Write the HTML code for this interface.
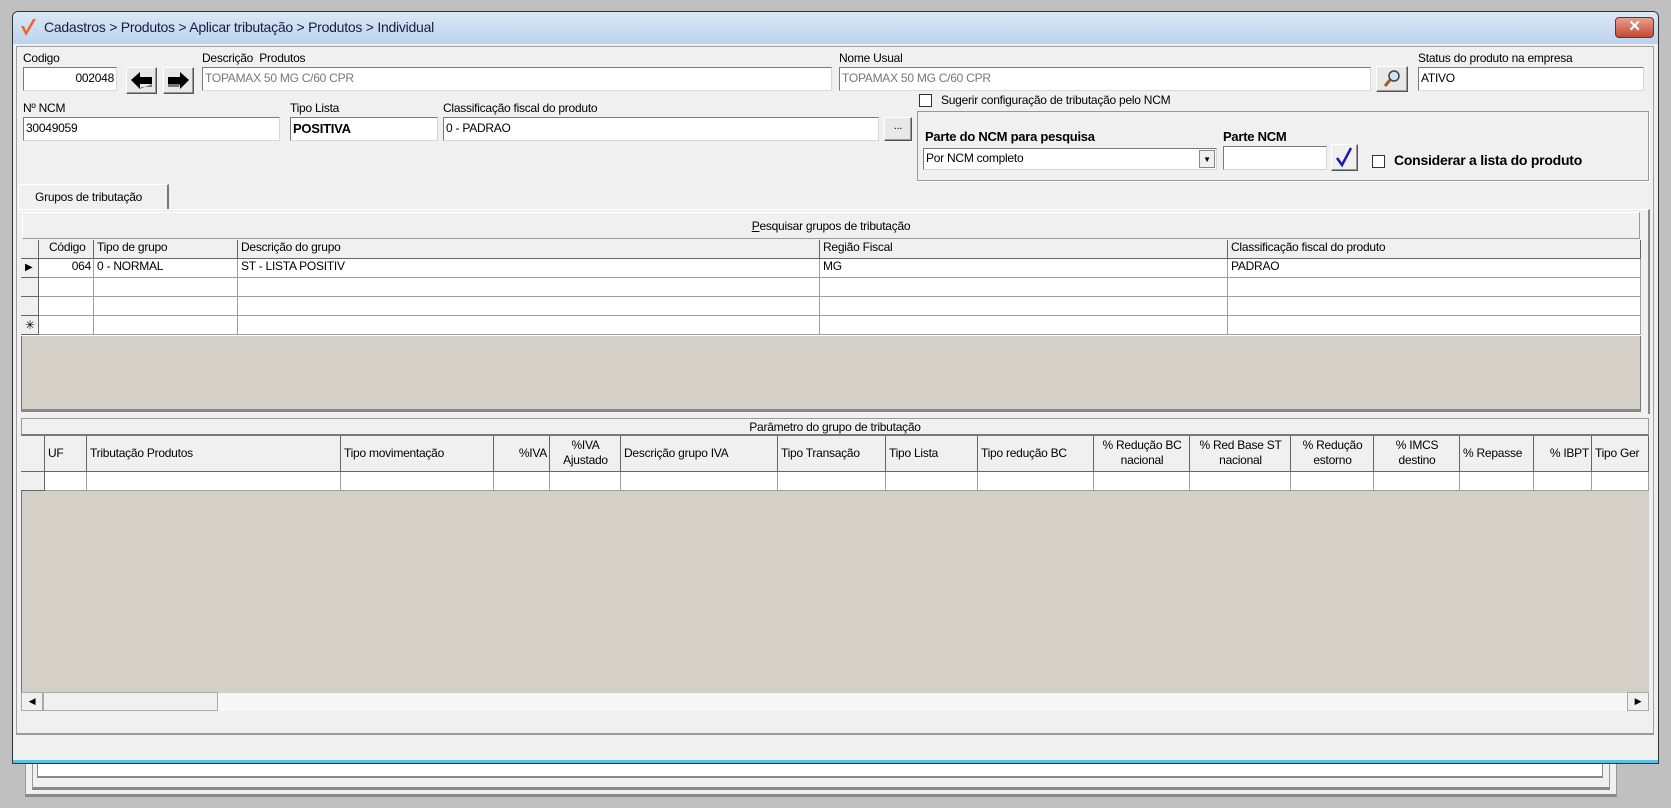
<!DOCTYPE html>
<html><head><meta charset="utf-8">
<style>
*{box-sizing:border-box;margin:0;padding:0}
body{width:1671px;height:808px;background:#c0c0c0;position:relative;overflow:hidden;font-family:"Liberation Sans",sans-serif;font-size:12px;color:#000;letter-spacing:-0.25px}
.a{position:absolute}
.inp{position:absolute;background:#fff;border:1px solid #7a7a7a;border-right-color:#d8d8d8;border-bottom-color:#d8d8d8;height:24px;line-height:21px;padding-left:2px;white-space:nowrap;overflow:hidden}
.gray{color:#777}
.btn{position:absolute;background:#e8e8e8;border:1px solid #fff;border-right-color:#555;border-bottom-color:#555;box-shadow:inset -1px -1px 0 #999}
.lbl{position:absolute;white-space:nowrap}
.cb{position:absolute;width:13px;height:13px;border:1px solid #333;background:#fff}
.g{position:absolute;border-right:1px solid #a0a0a0;border-bottom:1px solid #a0a0a0;white-space:nowrap;overflow:hidden;padding-left:3px}
.hd{background:#f0f0f0}
</style></head><body>
<!-- background windows -->
<div class="a" style="left:25px;top:760px;width:1592px;height:37px;background:#f0f0f0;border:1px solid #999;border-bottom:3px solid #888"></div>
<div class="a" style="left:32px;top:760px;width:1578px;height:30px;border-bottom:3px solid #888;border-left:1px solid #999;border-right:1px solid #999"></div>
<div class="a" style="left:37px;top:760px;width:1566px;height:18px;background:#fff;border:1px solid #888;border-top:0;border-bottom:2px solid #888"></div>
<!-- main window -->
<div class="a" style="left:12px;top:11px;width:1647px;height:753px;background:#f0f0f0;border:1px solid #333;border-radius:6px 6px 0 0;box-shadow:inset 0 -3px 0 #5bc0e8"></div>
<div class="a" style="left:13px;top:12px;width:1645px;height:32px;background:linear-gradient(#dce8f5,#bcd3ee);border-radius:5px 5px 0 0"></div>
<svg class="a" style="left:18px;top:17px" width="22" height="22" viewBox="0 0 22 22"><path d="M3 9 L8 19 L18 2 L15 2 L8 14 L6 9 Z" fill="#f0642a"/></svg>
<div class="lbl" style="left:44px;top:19px;font-size:14px;color:#1a1a40">Cadastros &gt; Produtos &gt; Aplicar tributação &gt; Produtos &gt; Individual</div>
<div class="a" style="left:1615px;top:17px;width:39px;height:21px;border-radius:4px;background:linear-gradient(#e6a08e,#c44a33);border:1px solid #7a2a20;color:#fff;font-weight:bold;font-size:15px;text-align:center;line-height:18px">✕</div>
<!-- client panel -->
<div class="a" style="left:16px;top:46px;width:1638px;height:689px;border:1px solid #a0a0a0;border-bottom:2px solid #999"></div>

<div class="lbl" style="left:23px;top:51px">Codigo</div>
<div class="inp" style="left:23px;top:67px;width:94px;text-align:right;padding-right:2px">002048</div>
<div class="btn" style="left:126px;top:67px;width:31px;height:27px"><svg width="29" height="25" viewBox="0 0 29 25"><path d="M4 12 L13 4 L13 9 L25 9 L25 16 L13 16 L13 21 Z" fill="#000"/><path d="M13 21 L25 16 L25 19 L14 19Z" fill="#777"/></svg></div>
<div class="btn" style="left:163px;top:67px;width:31px;height:27px"><svg width="29" height="25" viewBox="0 0 29 25"><path d="M25 12 L16 4 L16 9 L4 9 L4 16 L16 16 L16 21 Z" fill="#000"/><path d="M4 16 L4 19 L15 19 L16 16Z" fill="#777"/></svg></div>
<div class="lbl" style="left:202px;top:51px">Descrição &nbsp;Produtos</div>
<div class="inp gray" style="left:202px;top:67px;width:630px">TOPAMAX 50 MG C/60 CPR</div>
<div class="lbl" style="left:839px;top:51px">Nome Usual</div>
<div class="inp gray" style="left:839px;top:67px;width:532px">TOPAMAX 50 MG C/60 CPR</div>
<div class="btn" style="left:1376px;top:66px;width:32px;height:26px"><svg width="30" height="24" viewBox="0 0 30 24"><circle cx="17" cy="9" r="5" fill="#cfe4f5" stroke="#444" stroke-width="1.5"/><path d="M13 13 L8 19" stroke="#a06020" stroke-width="3"/></svg></div>
<div class="lbl" style="left:1418px;top:51px">Status do produto na empresa</div>
<div class="inp" style="left:1418px;top:67px;width:226px">ATIVO</div>

<div class="lbl" style="left:23px;top:101px">Nº NCM</div>
<div class="inp" style="left:23px;top:117px;width:257px">30049059</div>
<div class="lbl" style="left:290px;top:101px">Tipo Lista</div>
<div class="inp" style="left:290px;top:117px;width:148px;font-weight:bold;font-size:13px">POSITIVA</div>
<div class="lbl" style="left:443px;top:101px">Classificação fiscal do produto</div>
<div class="inp" style="left:443px;top:117px;width:436px">0 - PADRAO</div>
<div class="btn" style="left:884px;top:117px;width:28px;height:24px;text-align:center;line-height:16px;font-size:11px">...</div>

<div class="cb" style="left:919px;top:94px"></div>
<div class="lbl" style="left:941px;top:93px">Sugerir configuração de tributação pelo NCM</div>
<div class="a" style="left:917px;top:111px;width:732px;height:70px;border:1px solid #999;box-shadow:1px 1px 0 #fff"></div>
<div class="lbl" style="left:925px;top:129px;font-weight:bold;font-size:13px">Parte do NCM para pesquisa</div>
<div class="lbl" style="left:1223px;top:129px;font-weight:bold;font-size:13px">Parte NCM</div>
<div class="inp" style="left:923px;top:148px;width:294px;height:22px;line-height:19px">Por NCM completo</div>
<div class="a" style="left:1199px;top:150px;width:16px;height:18px;background:#f0f0f0;border:1px solid #888;font-size:8px;text-align:center;line-height:17px">▼</div>
<div class="inp" style="left:1223px;top:146px;width:104px;height:24px"></div>
<div class="btn" style="left:1331px;top:144px;width:27px;height:27px;background:#f0f0f0"><svg width="25" height="25" viewBox="0 0 25 25"><path d="M5 13 L10 20 L19 3" fill="none" stroke="#1a1ab0" stroke-width="2.5"/></svg></div>
<div class="cb" style="left:1372px;top:155px"></div>
<div class="lbl" style="left:1394px;top:152px;font-weight:bold;font-size:14px">Considerar a lista do produto</div>

<!-- tab -->
<div class="a" style="left:18px;top:184px;width:151px;height:26px;border:1px solid #fff;border-right:2px solid #777;border-bottom:0;background:#f0f0f0"></div>
<div class="lbl" style="left:35px;top:190px">Grupos de tributação</div>
<div class="a" style="left:18px;top:209px;width:1632px;height:205px;border-top:1px solid #fff;border-right:2px solid #888"></div>
<div class="a" style="left:22px;top:212px;width:1618px;height:27px;background:#f0f0f0;border:1px solid #fff;border-right-color:#999;border-bottom-color:#999;text-align:center;line-height:26px"><u>P</u>esquisar grupos de tributação</div>
<!-- grid 1 -->
<div class="a" style="left:21px;top:240px;width:1620px;height:172px;background:#d4d0c8;border:1px solid #777;border-bottom:3px solid #888"></div>
<div class="a" style="left:21px;top:240px;width:1620px;height:96px;background:#fff"></div>
<div class="g hd" style="left:21px;top:240px;width:18px;height:19px;border-color:#666"></div>
<div class="g hd" style="left:39px;top:240px;width:55px;height:19px;border-color:#666;padding-left:10px">Código</div>
<div class="g hd" style="left:94px;top:240px;width:144px;height:19px;border-color:#666">Tipo de grupo</div>
<div class="g hd" style="left:238px;top:240px;width:582px;height:19px;border-color:#666">Descrição do grupo</div>
<div class="g hd" style="left:820px;top:240px;width:408px;height:19px;border-color:#666">Região Fiscal</div>
<div class="g hd" style="left:1228px;top:240px;width:413px;height:19px;border-color:#666">Classificação fiscal do produto</div>
<!-- rows -->
<div class="g hd" style="left:21px;top:259px;width:18px;height:19px;border-color:#666;font-size:10px;padding-left:4px;line-height:18px">▶</div>
<div class="g" style="left:39px;top:259px;width:55px;height:19px;text-align:right;padding-right:2px">064</div>
<div class="g" style="left:94px;top:259px;width:144px;height:19px">0 - NORMAL</div>
<div class="g" style="left:238px;top:259px;width:582px;height:19px">ST - LISTA POSITIV</div>
<div class="g" style="left:820px;top:259px;width:408px;height:19px">MG</div>
<div class="g" style="left:1228px;top:259px;width:413px;height:19px">PADRAO</div>

<div class="g hd" style="left:21px;top:278px;width:18px;height:19px;border-color:#666"></div>
<div class="g" style="left:39px;top:278px;width:55px;height:19px"></div><div class="g" style="left:94px;top:278px;width:144px;height:19px"></div><div class="g" style="left:238px;top:278px;width:582px;height:19px"></div><div class="g" style="left:820px;top:278px;width:408px;height:19px"></div><div class="g" style="left:1228px;top:278px;width:413px;height:19px"></div>
<div class="g hd" style="left:21px;top:297px;width:18px;height:19px;border-color:#666"></div>
<div class="g" style="left:39px;top:297px;width:55px;height:19px"></div><div class="g" style="left:94px;top:297px;width:144px;height:19px"></div><div class="g" style="left:238px;top:297px;width:582px;height:19px"></div><div class="g" style="left:820px;top:297px;width:408px;height:19px"></div><div class="g" style="left:1228px;top:297px;width:413px;height:19px"></div>
<div class="g hd" style="left:21px;top:316px;width:18px;height:19px;border-color:#666;padding-left:4px;line-height:18px">✳</div>
<div class="g" style="left:39px;top:316px;width:55px;height:19px"></div><div class="g" style="left:94px;top:316px;width:144px;height:19px"></div><div class="g" style="left:238px;top:316px;width:582px;height:19px"></div><div class="g" style="left:820px;top:316px;width:408px;height:19px"></div><div class="g" style="left:1228px;top:316px;width:413px;height:19px"></div>

<!-- grid 2 -->
<div class="a" style="left:21px;top:418px;width:1628px;height:18px;background:#f0f0f0;border:1px solid #999;border-bottom:2px solid #777;text-align:center;line-height:16px">Parâmetro do grupo de tributação</div>
<div class="a" style="left:21px;top:436px;width:1628px;height:275px;background:#d4d0c8;border-left:1px solid #777;border-bottom:2px solid #888"></div>
<div class="a" style="left:21px;top:472px;width:1628px;height:19px;background:#fff"></div>
<div id="g2"></div>
<!-- scrollbar -->
<div class="a" style="left:21px;top:692px;width:1628px;height:19px;background:#f7f7f7;border-top:1px solid #ccc"></div>
<div class="a" style="left:21px;top:692px;width:22px;height:19px;background:#f0f0f0;border:1px solid #aaa;font-size:9px;text-align:center;line-height:17px">◀</div>
<div class="a" style="left:43px;top:692px;width:175px;height:19px;background:#f0f0f0;border:1px solid #aaa"></div>
<div class="a" style="left:1627px;top:692px;width:22px;height:19px;background:#f0f0f0;border:1px solid #aaa;font-size:9px;text-align:center;line-height:17px">▶</div>
<script>
var xs=[21,45,87,341,494,550,621,778,886,978,1094,1190,1291,1374,1460,1534,1592,1649];
var hs=["","UF","Tributação Produtos","Tipo movimentação","%IVA","%IVA<br>Ajustado","Descrição grupo IVA","Tipo Transação","Tipo Lista","Tipo redução BC","% Redução BC<br>nacional","% Red Base ST<br>nacional","% Redução<br>estorno","% IMCS<br>destino","% Repasse","% IBPT","Tipo Ger"];
var al=["l","l","l","l","r","c","l","l","l","l","c","c","c","c","l","r","l"];
var h="";
for(var i=0;i<17;i++){var w=xs[i+1]-xs[i];var two=hs[i].indexOf("<br>")>=0;
var ta=al[i]=="r"?"right":al[i]=="c"?"center":"left";
h+='<div class="g hd" style="left:'+xs[i]+'px;top:436px;width:'+w+'px;height:36px;border-color:#666;text-align:'+ta+';padding-right:2px;line-height:'+(two?'15px;padding-top:2px':'34px')+'">'+hs[i]+'</div>';
h+='<div class="g'+(i==0?' hd':'')+'" style="left:'+xs[i]+'px;top:472px;width:'+w+'px;height:19px;'+(i==0?'border-color:#666':'')+'"></div>';}
document.getElementById("g2").innerHTML=h;
</script>
</body></html>
